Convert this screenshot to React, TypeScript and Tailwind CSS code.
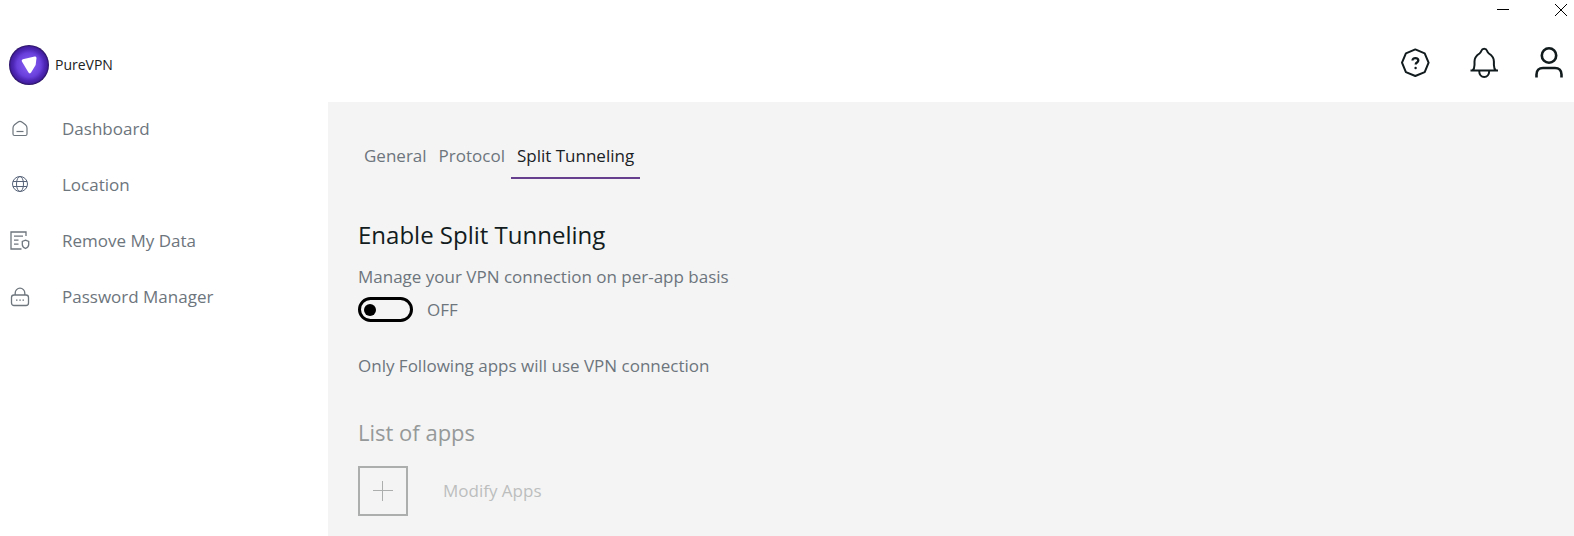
import { useState } from 'react';
import type { ReactNode } from 'react';

interface NavItem {
  label: string;
  icon: ReactNode;
}

const navItems: NavItem[] = [
  { label: 'Dashboard', icon: <HomeIcon /> },
  { label: 'Location', icon: <GlobeIcon /> },
  { label: 'Remove My Data', icon: <DataIcon /> },
  { label: 'Password Manager', icon: <LockIcon /> }
];

const tabs = ['General', 'Protocol', 'Split Tunneling'];

function HomeIcon() {
  return (
    <svg viewBox="0 0 20 20" className="size-5 shrink-0" fill="none" stroke="currentColor" strokeWidth="1.200">
      <path d="M3 9c0-1.400.5-2.300 1.500-3.200l3.300-2.600c1.300-1 3.100-1 4.400 0l3.300 2.600C16.500 6.700 17 7.600 17 9v6c0 .8-.5 1.500-1.500 1.500h-11C3.500 16.500 3 15.800 3 15z" />
      <path d="M6.500 12.500h7" />
    </svg>
  );
}

function GlobeIcon() {
  return (
    <svg viewBox="0 0 20 20" className="size-5 shrink-0 text-[#566378]" fill="none" stroke="currentColor">
      <circle cx="10" cy="9" r="7.500" />
      <ellipse cx="10" cy="9" rx="3.500" ry="7.500" />
      <path d="M3 6.500h14M3 11.500h14" />
    </svg>
  );
}

function DataIcon() {
  return (
    <svg viewBox="0 0 20 20" className="size-5 shrink-0" fill="none" stroke="currentColor" strokeWidth="1.300">
      <path d="M16 5V1H1v17h10.500M4 5.200h9M4 9.200h4.500M4 13.200h4.500" />
      <path d="M15.500 9.200l3.200 1.200v3c0 1.900-1.300 3.200-3.200 4.100-1.900-.9-3.200-2.200-3.200-4.100v-3z" />
    </svg>
  );
}

function LockIcon() {
  return (
    <svg viewBox="0 0 20 20" className="size-5 shrink-0" fill="none" stroke="currentColor" strokeWidth="1.300">
      <rect x="1.500" y="8" width="17" height="10.500" rx="2.500" />
      <path d="M5.200 8V6a4.800 4.800 0 0 1 9.600 0v2" />
      <path d="M6 13.200h1.500M9.300 13.200h1.500M12.500 13.200H14" />
    </svg>
  );
}

function Logo() {
  return (
    <svg viewBox="0 0 40 40" className="size-10">
      <defs>
        <radialGradient id="logo" cx="50%" cy="50%" r="50%">
          <stop offset="0" stopColor="#8a62f5" />
          <stop offset="0.600" stopColor="#6a40dc" />
          <stop offset="0.780" stopColor="#4f28b8" />
          <stop offset="0.900" stopColor="#4520a4" />
          <stop offset="1" stopColor="#26105e" />
        </radialGradient>
      </defs>
      <circle cx="20" cy="20" r="20" fill="url(#logo)" />
      <path d="M14.200 15.800L26 13l-.8 6.500-4.400 7.300z" fill="#fff" stroke="#fff" strokeWidth="3" strokeLinejoin="round" />
    </svg>
  );
}

function HelpIcon() {
  return (
    <svg viewBox="0 0 32 32" className="size-8" fill="none" stroke="currentColor" strokeWidth="2" strokeLinejoin="round">
      <path d="M15.300 2.400l9.400 3.900 3.900 9.400-3.900 9.400-9.400 3.900-9.400-3.900L2 15.700l3.900-9.400z" />
      <path d="M12.500 13.500c0-3.300 5.800-3 5.800 0 0 2.200-2.600 1.800-2.600 4" strokeWidth="2.300" />
      <circle cx="15.600" cy="21" r="1.200" fill="currentColor" stroke="none" />
    </svg>
  );
}

function BellIcon() {
  return (
    <svg viewBox="0 0 32 32" className="size-8" fill="none" stroke="currentColor" strokeWidth="2" strokeLinejoin="round">
      <path d="M3.500 23.500h27.500M5.500 23.500c1.500-1.500 2-3 2-5.500V14.500c0-3.700 2.200-6.200 5-8 1-.7 1.500-1.500 1.900-2.700.4-1.200 1.400-2 2.800-2s2.400.8 2.800 2c.4 1.200.9 2 1.900 2.700 2.800 1.800 5 4.300 5 8V18c0 2.500.5 4 2 5.500M12.200 24c0 3.700 2.200 6 5 6s5-2.300 5-6" />
    </svg>
  );
}

function UserIcon() {
  return (
    <svg viewBox="0 0 32 32" className="size-8" fill="none" stroke="currentColor" strokeWidth="2.600">
      <circle cx="15" cy="8.500" r="7.200" />
      <path d="M2.500 30.500v-3c0-4 2.500-6.500 6.500-6.500h12c4 0 6.500 2.500 6.500 6.500v3" />
    </svg>
  );
}

export default function App() {
  const [activeTab, setActiveTab] = useState('Split Tunneling');
  const [enabled, setEnabled] = useState(false);

  return (
    <div className="flex min-h-screen flex-col bg-white font-['Open_Sans',sans-serif] text-[17px] leading-6 text-[#6d757d]">
      <div className="flex h-6 items-start justify-end gap-[46px] pt-1 pr-[7px] text-black">
        <button aria-label="Minimize">
          <svg viewBox="0 0 12 12" className="size-3" stroke="currentColor">
            <path d="M0 5.500h12" />
          </svg>
        </button>
        <button aria-label="Close">
          <svg viewBox="0 0 12 12" className="size-3" stroke="currentColor">
            <path d="M0 0l12 12M12 0L0 12" />
          </svg>
        </button>
      </div>

      <div className="flex flex-1">
        <aside className="w-[328px] shrink-0">
          <div className="flex h-[82px] items-center gap-[6px] pl-[9px]">
            <Logo />
            <span className="text-sm text-[#222]">PureVPN</span>
          </div>
          <nav className="flex flex-col gap-8 pt-[11px] pl-[10px]">
            {navItems.map((item) => (
              <a key={item.label} href="#" className="flex items-center gap-8">
                {item.icon}
                {item.label}
              </a>
            ))}
          </nav>
        </aside>

        <div className="flex min-w-0 flex-1 flex-col">
          <div className="flex h-[78px] items-center justify-end gap-[35px] pr-2 text-[#111b1e]">
            <button aria-label="Help"><HelpIcon /></button>
            <button aria-label="Notifications"><BellIcon /></button>
            <button aria-label="Account"><UserIcon /></button>
          </div>

          <main className="flex-1 bg-[#f4f4f4] pt-[42px] pl-[30px]">
            <div role="tablist" className="flex">
              {tabs.map((tab) => (
                <button
                  key={tab}
                  role="tab"
                  aria-selected={tab === activeTab}
                  onClick={() => setActiveTab(tab)}
                  className={`border-b-2 px-[6px] pb-[9px] ${tab === activeTab ? 'border-[#66408f] text-[#1b2226]' : 'border-transparent'}`}
                >
                  {tab}
                </button>
              ))}
            </div>

            <h1 className="mt-10 text-2xl leading-8 text-[#121c20]">Enable Split Tunneling</h1>
            <p className="mt-[14px]">Manage your VPN connection on per-app basis</p>
            <label className="mt-2 flex items-center gap-[14px]">
              <input
                type="checkbox"
                role="switch"
                checked={enabled}
                onChange={(e) => setEnabled(e.target.checked)}
                className="flex h-[25px] w-[55px] appearance-none items-center rounded-full border-[3px] border-black px-[3px] before:size-3 before:rounded-full before:bg-black checked:justify-end"
              />
              {enabled ? 'ON' : 'OFF'}
            </label>
            <p className="mt-8">Only Following apps will use VPN connection</p>

            <h2 className="mt-[38px] text-[22px] leading-8 text-[#969999]">List of apps</h2>
            <button disabled className="mt-[18px] flex items-center gap-[35px] text-[#bcbebe]">
              <span className="flex size-[50px] items-center justify-center border-2 border-[#acaeae]">
                <svg viewBox="0 0 20 20" className="size-5 text-[#acaeae]" stroke="currentColor">
                  <path d="M0 9.500h20M9.500 0v20" />
                </svg>
              </span>
              Modify Apps
            </button>
          </main>
        </div>
      </div>
    </div>
  );
}
